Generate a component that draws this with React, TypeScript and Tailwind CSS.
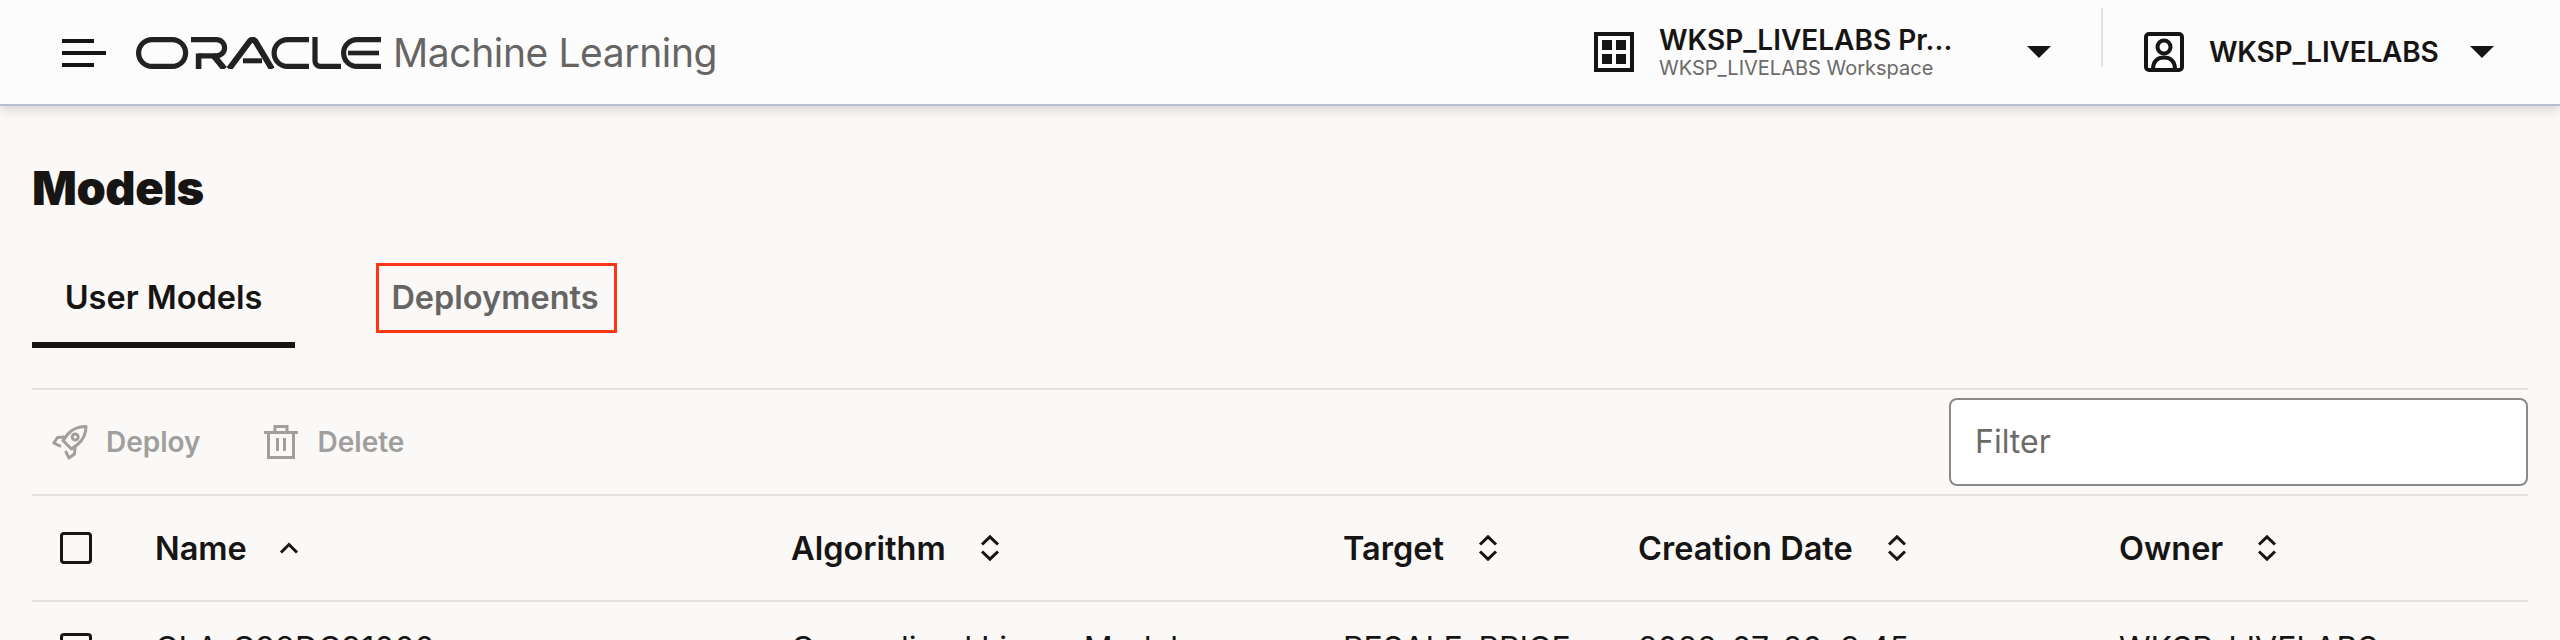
const SortIcon = () => (
  <svg width="20" height="26" viewBox="0 0 20 26" fill="none" stroke="#161513" strokeWidth="3" className="shrink-0">
    <path d="M2 9.5 10 1.8 18 9.5" />
    <path d="M2 16.5 10 24.2 18 16.5" />
  </svg>
);

const Caret = () => (
  <svg width="24" height="12" viewBox="0 0 24 12" className="shrink-0">
    <path d="M0 0H24L12 12Z" fill="#161513" />
  </svg>
);

const OracleLogo = () => (
  <svg width="246" height="32" viewBox="0 0 246 32" fill="none" stroke="#222221" strokeWidth="5.2" className="shrink-0">
    <rect x="2.6" y="2.6" width="47" height="26.8" rx="13.4" />
    <path d="M55 2.6H80.5A8 8 0 0 1 80.5 18.8H62.6" />
    <path d="M62.6 16.5V32" strokeWidth="5.6" />
    <path d="M77 18 88.5 32" strokeWidth="6" />
    <path d="M93 32 113.5 4.5Q116.5.8 119.5 4.5L136 32" strokeWidth="6" />
    <path d="M107 23.8H126" strokeWidth="5" />
    <path d="M173 2.6H151.5A13.4 13.4 0 0 0 151.5 29.4H173" />
    <path d="M179 0V24A5.4 5.4 0 0 0 184.4 29.4H205" />
    <path d="M245 2.6H221A13.4 13.4 0 0 0 221 29.4H245" />
    <path d="M212 16H243" strokeWidth="4.6" />
  </svg>
);

const RocketIcon = () => (
  <svg width="36" height="36" viewBox="0 0 36 36" fill="none" stroke="#a09f9d" strokeWidth="3" strokeLinejoin="round" className="shrink-0">
    <path d="M34 2.5C27 2.5 20 5 15.5 10.5L11 16.5 19.5 25 25.5 20.5C31 16 34 9 34 2.5Z" />
    <circle cx="23.2" cy="13" r="3" />
    <path d="M12.5 13 5.5 13.5 1.8 19 9 22.5" />
    <path d="M23 23 22.5 30 17 34 13.5 27" />
  </svg>
);

const TrashIcon = () => (
  <svg width="34" height="34" viewBox="0 0 34 34" fill="none" stroke="#a09f9d" strokeWidth="3" className="shrink-0">
    <path d="M0 7.5H34" />
    <path d="M4.5 7.5V32.5H29.5V7.5" />
    <path d="M11 7V1.5H23V7" />
    <path d="M13.5 13V26M20.5 13V26" />
  </svg>
);

const Checkbox = () => (
  <div className="w-8 h-8 rounded-[4px] border-[3px] border-[#161513] shrink-0" />
);

const headers = [
  { label: "Algorithm" },
  { label: "Target" },
  { label: "Creation Date" },
  { label: "Owner" },
];

const rowCells = ["Generalized Linear Model", "RESALE_PRICE", "2022-07-20, 3:45", "WKSP_LIVELABS"];

export default function App() {
  return (
    <div className="h-[640px] overflow-hidden bg-[#fbf9f8] text-[#161513] font-['Inter','Liberation_Sans',sans-serif]">
      <header className="relative z-10 h-[106px] bg-[#fcfcfc] border-b-2 border-[#b7bfcd] shadow-[0_4px_10px_rgba(0,0,0,0.14)] flex items-center pl-[62px] pr-[66px]">
        <svg width="44" height="28" viewBox="0 0 44 28" className="shrink-0 mb-[-2px]" fill="#161513">
          <rect x="0" y="0" width="32" height="4" />
          <rect x="0" y="12" width="44" height="4" />
          <rect x="0" y="24" width="32" height="4" />
        </svg>
        <div className="ml-[30px] mb-[-2px]"><OracleLogo /></div>
        <span className="ml-[11px] text-[39px] leading-[48px] text-[#666564] tracking-[-0.4px] mb-[-1px]">Machine Learning</span>

        <div className="ml-auto flex items-center h-full">
          <svg width="40" height="40" viewBox="0 0 40 40" className="shrink-0" fill="#161513">
            <path fillRule="evenodd" d="M0 0H40V40H0ZM4 4V36H36V4Z" />
            <rect x="8" y="8" width="10" height="10" />
            <rect x="22" y="8" width="10" height="10" />
            <rect x="8" y="22" width="10" height="10" />
            <rect x="22" y="22" width="10" height="10" />
          </svg>
          <div className="ml-[25px] w-[368px] flex flex-col">
            <span className="text-[28px] leading-[32px] font-semibold">WKSP_LIVELABS Pr...</span>
            <span className="text-[20px] leading-[24px] text-[#6b6a68]">WKSP_LIVELABS Workspace</span>
          </div>
          <Caret />
          <div className="ml-[50px] w-[2px] h-[59px] self-start mt-[8px] bg-[#e4e2e1]" />
          <svg width="40" height="40" viewBox="0 0 40 40" className="ml-[41px] shrink-0" fill="none" stroke="#161513" strokeWidth="4">
            <rect x="2" y="2" width="36" height="36" rx="3" />
            <circle cx="20" cy="15" r="6.5" />
            <path d="M9 37C9 29 14 25.5 20 25.5S31 29 31 37" />
          </svg>
          <span className="ml-[25px] w-[228px] whitespace-nowrap text-[28px] leading-[32px] font-semibold tracking-[-0.2px]">WKSP_LIVELABS</span>
          <div className="ml-[33px]"><Caret /></div>
        </div>
      </header>

      <main className="px-8">
        <h1 className="mt-[56px] text-[47px] leading-[52px] font-black tracking-[-0.5px]">Models</h1>

        <div className="mt-[49px] h-[85px] flex items-start">
          <div className="h-full w-[263px] border-b-[6px] border-[#161513] pt-[17px] text-center text-[32.5px] leading-[36px] font-semibold">
            User Models
          </div>
          <div className="ml-[81px] w-[241px] h-[70px] border-[3px] border-[#ff3517] pr-[3px] flex items-center justify-center text-[32.5px] leading-[36px] font-semibold text-[#666564]">
            Deployments
          </div>
        </div>

        <div className="mt-[40px] h-[106px] border-t-2 border-[#e4e2e1] flex items-center">
          <div className="ml-[20px] flex items-center gap-[18px]">
            <RocketIcon />
            <span className="text-[28px] leading-[32px] font-semibold text-[#a09f9d]">Deploy</span>
          </div>
          <div className="ml-[63px] flex items-center gap-[20px]">
            <TrashIcon />
            <span className="text-[28px] leading-[32px] font-semibold text-[#a09f9d]">Delete</span>
          </div>
          <div className="ml-auto w-[579px] h-[88px] rounded-[8px] border-2 border-[#8b8a88] bg-white flex items-center pl-[24px] text-[32px] leading-[36px] text-[#6b6a68]">
            Filter
          </div>
        </div>

        <div className="grid grid-cols-[123px_636px_552px_295px_481px_1fr] items-center h-[106px] border-t-2 border-[#e4e2e1]">
          <div className="pl-[28px]"><Checkbox /></div>
          <div className="flex items-center gap-[32px] text-[32.5px] leading-[36px] font-semibold">
            <span className="pt-[2px]">Name</span>
            <svg width="20" height="12" viewBox="0 0 20 12" fill="none" stroke="#161513" strokeWidth="3" className="shrink-0">
              <path d="M2 10.5 10 2.5 18 10.5" />
            </svg>
          </div>
          {headers.map((h) => (
            <div key={h.label} className="flex items-center gap-[34px] text-[32.5px] leading-[36px] font-semibold">
              <span className="pt-[2px]">{h.label}</span>
              <SortIcon />
            </div>
          ))}
        </div>

        <div className="grid grid-cols-[123px_636px_552px_295px_481px_1fr] items-start border-t-2 border-[#e4e2e1] pt-[31px]">
          <div className="pl-[28px]"><Checkbox /></div>
          <div className="text-[32px] leading-[32px]">CLA_C98DC91000</div>
          {rowCells.map((c) => (
            <div key={c} className="text-[32px] leading-[32px]">{c}</div>
          ))}
        </div>
      </main>
    </div>
  );
}
